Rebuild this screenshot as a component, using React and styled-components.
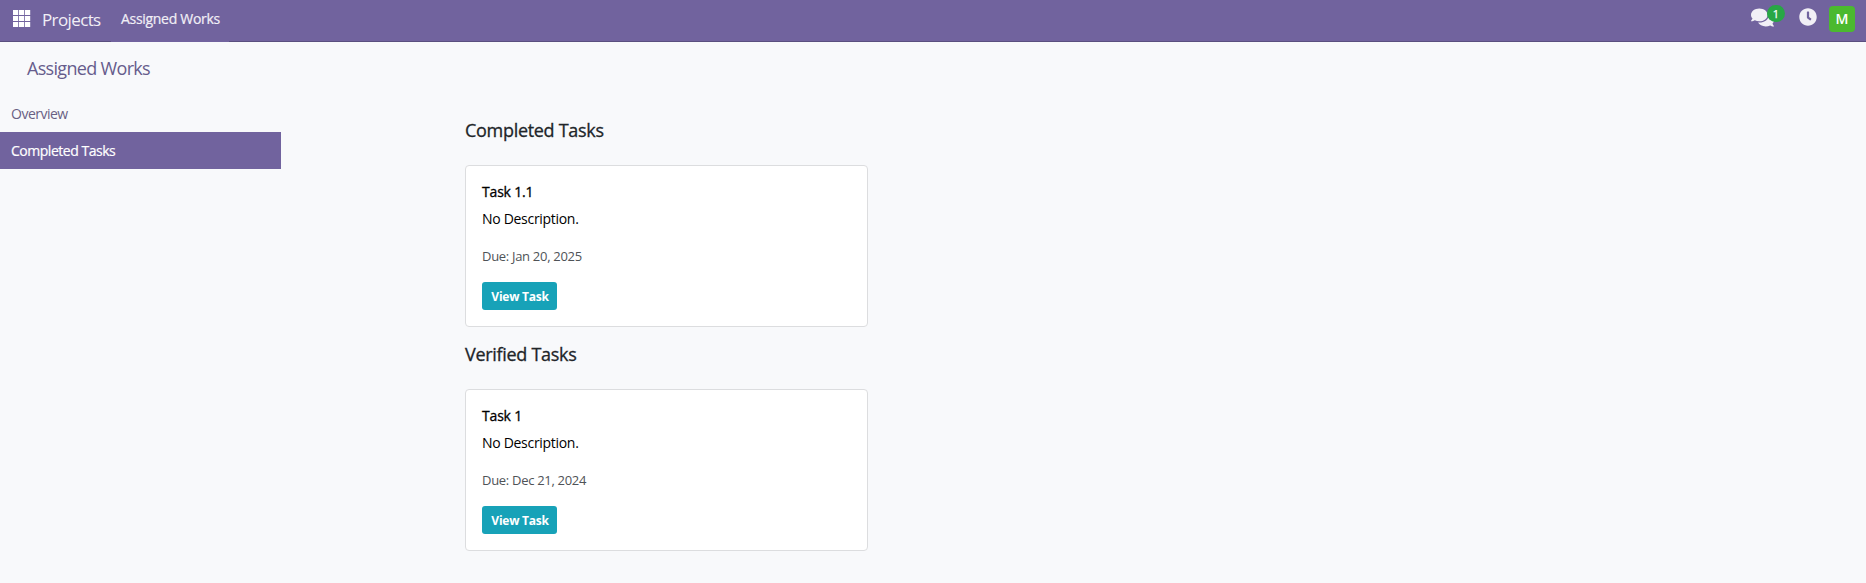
import React from "react";
import styled, { createGlobalStyle } from "styled-components";
import { FaClock, FaComments } from "react-icons/fa";

const GlobalStyle = createGlobalStyle`
  *, *::before, *::after { box-sizing: border-box; }
  body {
    margin: 0;
    background: #f8f9fa;
    color: #212529;
    font-family: "Segoe UI", "Open Sans", "Noto Sans", sans-serif;
    font-size: 14px;
    line-height: 21px;
  }
`;

const Page = styled.div`
  min-height: 583px;
  background: #f8f9fb;
`;

const Navbar = styled.header`
  display: flex;
  height: 42px;
  padding: 0 11px 0 13px;
  background: #71639e;
  border-bottom: 1px solid #5a4f7f;
  color: #f1eff6;
`;

const AppsIcon = styled.svg`
  width: 18px;
  height: 17px;
  margin-top: 10px;
  fill: #fff;
`;

const Brand = styled.a`
  margin-left: 11px;
  width: 69px;
  padding-top: 9px;
  font-size: 17px;
  letter-spacing: -0.62px;
  white-space: nowrap;
`;

const NavItem = styled.a`
  width: 118px;
  height: 42px;
  padding: 8px 0 0 10px;
  background: #71639e;
  letter-spacing: -0.3px;
  -webkit-text-stroke: 0.2px;
  white-space: nowrap;
`;

const Systray = styled.div`
  display: flex;
  margin-left: auto;
`;

const MessagesButton = styled.div`
  position: relative;
  width: 48px;
  padding-top: 6px;
`;

const Badge = styled.span`
  position: absolute;
  top: 5px;
  left: 16px;
  width: 18px;
  height: 17px;
  border-radius: 9px;
  background: #28a745;
  color: #fff;
  font-size: 11px;
  -webkit-text-stroke: 0.25px;
  line-height: 17px;
  text-align: center;
`;

const ClockButton = styled.div`
  width: 30px;
  padding-top: 8px;
`;

const Avatar = styled.div`
  width: 26px;
  height: 26px;
  margin-top: 6px;
  border-radius: 4px;
  background: #4bb92f;
  color: #fff;
  font-weight: 600;
  line-height: 26px;
  text-align: center;
`;

const ControlPanel = styled.div`
  height: 53px;
  padding: 16px 27px 0;
`;

const PageTitle = styled.h1`
  margin: 0;
  color: #665c8c;
  font-size: 18px;
  font-weight: 400;
  line-height: 21px;
  letter-spacing: -0.68px;
`;

const Content = styled.div`
  display: flex;
`;

const Sidebar = styled.nav`
  width: 281px;
  margin-right: 184px;
`;

const SidebarItem = styled.a`
  display: block;
  height: 37px;
  padding: 8px 11px;
  background: ${(p) => (p.$active ? "#71639e" : "transparent")};
  color: ${(p) => (p.$active ? "#fff" : "#696083")};
  letter-spacing: ${(p) => (p.$active ? "-0.48px" : "-0.5px")};
  -webkit-text-stroke: ${(p) => (p.$active ? "0.2px" : "0")};
`;

const Main = styled.main`
  width: 403px;
  padding-top: 21px;
`;

const Section = styled.section`
  height: 224px;
`;

const SectionTitle = styled.h2`
  margin: 0 0 21px;
  font-size: 18px;
  font-weight: 500;
  line-height: 28px;
  letter-spacing: -0.3px;
  -webkit-text-stroke: 0.3px;
`;

const Card = styled.article`
  height: 162px;
  padding: 15px 16px;
  background: #fff;
  border: 1px solid #dcdddf;
  border-radius: 4px;
  color: #000;
`;

const TaskName = styled.h3`
  margin: 0 0 6px;
  font-size: 14px;
  font-weight: 500;
  line-height: 21px;
  letter-spacing: -0.18px;
  -webkit-text-stroke: 0.3px;
`;

const Description = styled.p`
  margin: 0 0 17px;
  letter-spacing: -0.3px;
`;

const DueDate = styled.p`
  margin: 0 0 15px;
  color: #4f5357;
  font-size: 13px;
  letter-spacing: -0.3px;
`;

const ViewButton = styled.button`
  display: block;
  width: 75px;
  height: 28px;
  padding: 1px 0 0 1px;
  border: 0;
  border-radius: 3px;
  background: #17a2b8;
  color: #fff;
  font: 700 12px/27px "Segoe UI", "Open Sans", "Noto Sans", sans-serif;
  letter-spacing: -0.25px;
`;

const sections = [
  { title: "Completed Tasks", task: "Task 1.1", due: "Jan 20, 2025" },
  { title: "Verified Tasks", task: "Task 1", due: "Dec 21, 2024" },
];

const cells = [0, 1, 2].flatMap((r) => [0, 1, 2].map((c) => [c * 6, r * 6]));

export default function App() {
  return (
    <Page>
      <GlobalStyle />
      <Navbar>
        <AppsIcon viewBox="0 0 18 17">
          {cells.map(([x, y]) => (
            <rect key={`${x}-${y}`} x={x} y={y} width="5.2" height="5" />
          ))}
        </AppsIcon>
        <Brand>Projects</Brand>
        <NavItem>Assigned Works</NavItem>
        <Systray>
          <MessagesButton>
            <FaComments size={23} />
            <Badge>1</Badge>
          </MessagesButton>
          <ClockButton>
            <FaClock size={18} />
          </ClockButton>
          <Avatar>M</Avatar>
        </Systray>
      </Navbar>
      <ControlPanel>
        <PageTitle>Assigned Works</PageTitle>
      </ControlPanel>
      <Content>
        <Sidebar>
          <SidebarItem>Overview</SidebarItem>
          <SidebarItem $active>Completed Tasks</SidebarItem>
        </Sidebar>
        <Main>
          {sections.map((s) => (
            <Section key={s.title}>
              <SectionTitle>{s.title}</SectionTitle>
              <Card>
                <TaskName>{s.task}</TaskName>
                <Description>No Description.</Description>
                <DueDate>Due: {s.due}</DueDate>
                <ViewButton>View Task</ViewButton>
              </Card>
            </Section>
          ))}
        </Main>
      </Content>
    </Page>
  );
}
